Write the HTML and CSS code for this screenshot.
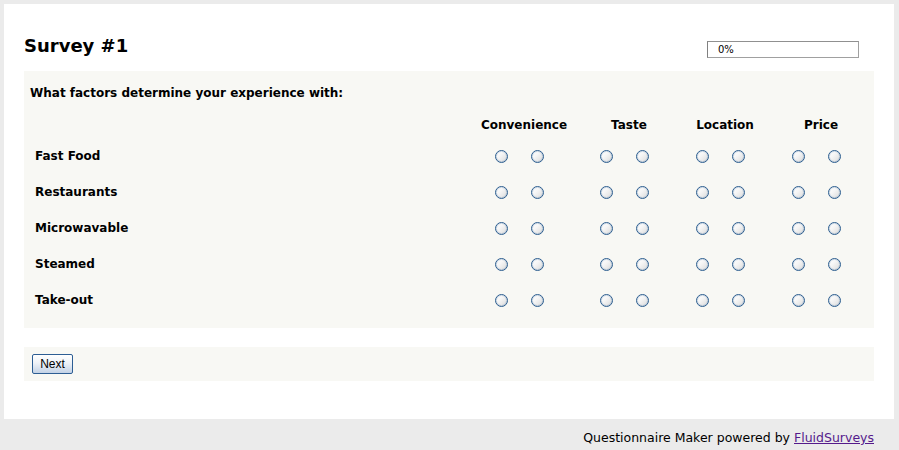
FILE: index.html
```html
<!DOCTYPE html>
<html>
<head>
<meta charset="utf-8">
<title>Survey #1</title>
<link rel="stylesheet" href="styles.css">
</head>
<body>
<div class="page">
  <div class="top">
    <h1 class="title">Survey #1</h1>
    <div class="progress"><span class="progress-text">0%</span></div>
  </div>
  <div class="question">
    <div class="q-text">What factors determine your experience with:</div>
    <div class="matrix">
      <div class="cell"></div>
      <div class="cell head"><span class="head-text">Convenience</span></div>
      <div class="cell head"><span class="head-text">Taste</span></div>
      <div class="cell head"><span class="head-text">Location</span></div>
      <div class="cell head"><span class="head-text">Price</span></div>

      <div class="cell label">Fast Food</div>
      <div class="cell grp"><span class="radio"></span><span class="radio"></span></div>
      <div class="cell grp"><span class="radio"></span><span class="radio"></span></div>
      <div class="cell grp"><span class="radio"></span><span class="radio"></span></div>
      <div class="cell grp"><span class="radio"></span><span class="radio"></span></div>

      <div class="cell label">Restaurants</div>
      <div class="cell grp"><span class="radio"></span><span class="radio"></span></div>
      <div class="cell grp"><span class="radio"></span><span class="radio"></span></div>
      <div class="cell grp"><span class="radio"></span><span class="radio"></span></div>
      <div class="cell grp"><span class="radio"></span><span class="radio"></span></div>

      <div class="cell label">Microwavable</div>
      <div class="cell grp"><span class="radio"></span><span class="radio"></span></div>
      <div class="cell grp"><span class="radio"></span><span class="radio"></span></div>
      <div class="cell grp"><span class="radio"></span><span class="radio"></span></div>
      <div class="cell grp"><span class="radio"></span><span class="radio"></span></div>

      <div class="cell label">Steamed</div>
      <div class="cell grp"><span class="radio"></span><span class="radio"></span></div>
      <div class="cell grp"><span class="radio"></span><span class="radio"></span></div>
      <div class="cell grp"><span class="radio"></span><span class="radio"></span></div>
      <div class="cell grp"><span class="radio"></span><span class="radio"></span></div>

      <div class="cell label">Take-out</div>
      <div class="cell grp"><span class="radio"></span><span class="radio"></span></div>
      <div class="cell grp"><span class="radio"></span><span class="radio"></span></div>
      <div class="cell grp"><span class="radio"></span><span class="radio"></span></div>
      <div class="cell grp"><span class="radio"></span><span class="radio"></span></div>
    </div>
  </div>
  <div class="nav">
    <button class="next" type="button">Next</button>
  </div>
</div>
<div class="footer">Questionnaire Maker powered by <a class="footer-link" href="#">FluidSurveys</a></div>
</body>
</html>
```

FILE: styles.css
```css
html, body {
  margin: 0;
  padding: 0;
}
body {
  background: #ebebeb;
  padding: 4px 5px 0 4px;
  font-family: "DejaVu Sans", Verdana, sans-serif;
  color: #000;
  height: 446px;
  box-sizing: border-box;
  overflow: hidden;
}
.page {
  background: #fff;
  height: 415px;
  box-sizing: border-box;
  padding: 0 20px;
}
.top {
  display: flex;
  justify-content: space-between;
  align-items: flex-start;
  height: 67px;
}
.title {
  margin: 31px 0 0 0;
  font-size: 18px;
  font-weight: bold;
  line-height: 22px;
}
.progress {
  margin: 37px 15px 0 0;
  width: 150px;
  height: 15px;
  border: 1px solid #a0a0a0;
  border-left-color: #808080;
  border-top-color: #909090;
  background: #fff;
  display: flex;
  align-items: center;
}
.progress-text {
  font-size: 10px;
  padding-left: 10px;
  line-height: 15px;
}
.question {
  background: #f8f8f4;
  height: 257px;
  box-sizing: border-box;
  padding: 13px 0 0 0;
}
.q-text {
  font-size: 12px;
  font-weight: bold;
  line-height: 18px;
  padding-left: 6px;
}
.matrix {
  display: grid;
  grid-template-columns: 459px 105px 96px 96px 94px;
  grid-template-rows: 26px repeat(5, 36px);
  margin-top: 10px;
}
.cell {
  display: flex;
  align-items: center;
}
.head {
  font-size: 12px;
  font-weight: bold;
}
.head-text {
  width: 82px;
  text-align: center;
  white-space: nowrap;
  display: flex;
  justify-content: center;
}
.label {
  font-size: 12px;
  font-weight: bold;
  padding-left: 11px;
}
.radio {
  width: 36px;
  height: 13px;
  display: flex;
  justify-content: center;
}
.radio::before {
  content: "";
  width: 13px;
  height: 13px;
  box-sizing: border-box;
  border-radius: 50%;
  border: 1px solid #2c5d8f;
  box-shadow: inset 0 0 0 1px rgba(70, 120, 170, 0.22);
  background: linear-gradient(135deg, #ffffff 0%, #f6f6f6 40%, #dadada 100%);
}
.nav {
  margin-top: 19px;
  background: #f8f8f4;
  height: 34px;
  box-sizing: border-box;
  padding: 6px 0 0 8px;
}
.next {
  width: 41px;
  height: 20px;
  padding: 0;
  margin: 0;
  border: 1px solid #2d5e94;
  border-radius: 2px;
  background: linear-gradient(#ffffff 0%, #eef2f7 45%, #c3d2e6 100%);
  font-family: "Liberation Sans", Arial, sans-serif;
  font-size: 12px;
  color: #000;
  line-height: 18px;
}
.footer {
  text-align: right;
  padding: 10px 20px 0 0;
  font-size: 12.5px;
  line-height: 18px;
}
.footer-link {
  color: #551a8b;
}
```
